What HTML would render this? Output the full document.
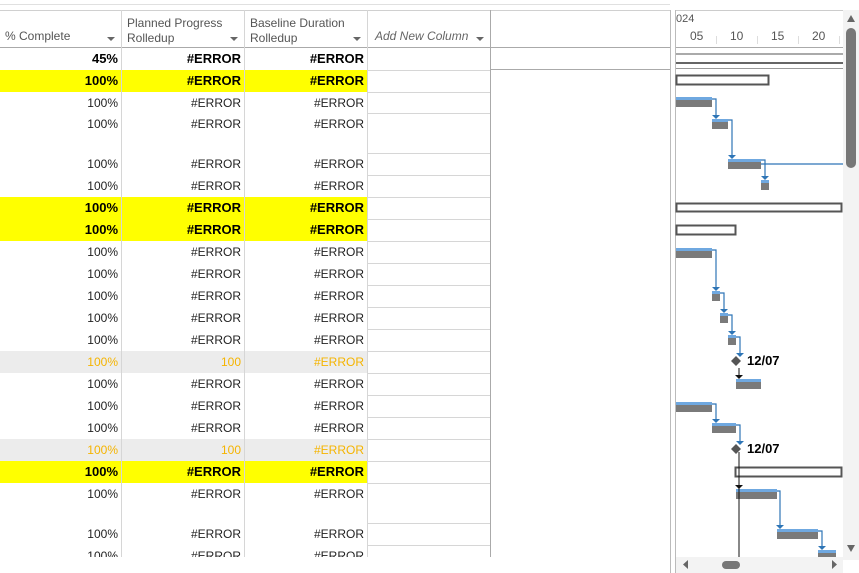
<!DOCTYPE html>
<html><head><style>
body{margin:0;width:859px;height:573px;overflow:hidden;background:#fff;font-family:"Liberation Sans",sans-serif;position:relative}
.a{position:absolute}
.c{position:absolute;text-align:right;font-size:12px;color:#222;box-sizing:border-box;padding-right:3px;line-height:22px}
.b{font-weight:bold;font-size:13px;color:#000}
.o{color:#f5b400}
.h{position:absolute;font-size:12px;color:#555;line-height:15px}
</style></head><body>
<div class="a" style="left:0;top:4px;width:670px;height:1px;background:#e0e0e0"></div>
<div class="a" style="left:0;top:10px;width:670px;height:1px;background:#d0d0d0"></div>
<div class="h" style="left:5px;top:29px">% Complete</div>
<div class="h" style="left:127px;top:16px">Planned Progress<br>Rolledup</div>
<div class="h" style="left:250px;top:16px">Baseline Duration<br>Rolledup</div>
<div class="h" style="left:375px;top:29px;font-style:italic;color:#666">Add New Column</div>
<div class="a" style="left:107px;top:37px;border:4px solid transparent;border-top:4px solid #666"></div>
<div class="a" style="left:230px;top:37px;border:4px solid transparent;border-top:4px solid #666"></div>
<div class="a" style="left:353px;top:37px;border:4px solid transparent;border-top:4px solid #666"></div>
<div class="a" style="left:476px;top:37px;border:4px solid transparent;border-top:4px solid #666"></div>
<div class="a" style="left:0;top:47px;width:670px;height:1px;background:#aaa"></div>
<div class="a" style="left:490px;top:69px;width:180px;height:1px;background:#aaa"></div>
<div id="rows"></div>
<div class="a" style="left:121px;top:10px;width:1px;height:547px;background:#d6d6d6"></div>
<div class="a" style="left:244px;top:10px;width:1px;height:547px;background:#d6d6d6"></div>
<div class="a" style="left:367px;top:10px;width:1px;height:547px;background:#d6d6d6"></div>
<div class="a" style="left:490px;top:10px;width:1px;height:547px;background:#aaa"></div>
<div class="a" style="left:670px;top:10px;width:1px;height:563px;background:#bbb"></div>
<div class="a" style="left:675px;top:10px;width:1px;height:563px;background:#bbb"></div>
<div class="a" style="left:676px;top:10px;width:170px;height:1px;background:#ccc"></div>
<div class="a" style="left:676px;top:13px;font-size:11px;color:#555">024</div>
<div class="a" style="left:690px;top:29px;font-size:12px;color:#555">05</div>
<div class="a" style="left:730px;top:29px;font-size:12px;color:#555">10</div>
<div class="a" style="left:771px;top:29px;font-size:12px;color:#555">15</div>
<div class="a" style="left:812px;top:29px;font-size:12px;color:#555">20</div>
<div class="a" style="left:676px;top:47px;width:167px;height:1px;background:#aaa"></div>
<svg class="a" style="left:0;top:0" width="859" height="573">
<g stroke="#ddd"><line x1="716.5" y1="36" x2="716.5" y2="44"/><line x1="757.5" y1="36" x2="757.5" y2="44"/><line x1="798.5" y1="36" x2="798.5" y2="44"/><line x1="839.5" y1="36" x2="839.5" y2="44"/></g>
<g>
<rect x="676" y="53" width="167" height="2" fill="#aaa"/>
<rect x="676" y="62" width="167" height="2" fill="#666"/>
<rect x="676" y="68" width="167" height="1" fill="#999"/>
<rect x="676.5" y="75.5" width="92" height="9" fill="none" stroke="#555" stroke-width="2"/>
<rect x="676.5" y="203.5" width="165" height="8" fill="none" stroke="#555" stroke-width="2"/>
<rect x="676.5" y="225.5" width="59" height="9" fill="none" stroke="#555" stroke-width="2"/>
<rect x="735.5" y="467.5" width="106" height="9" fill="none" stroke="#555" stroke-width="2"/>
</g>
<g id="bars"></g>
<g fill="none" stroke="#2e75b6" stroke-width="1.2">
<path d="M712 99 H716 V118"/><path d="M728 120 H732 V158"/><path d="M761 160 H765 V179"/><path d="M761 164 H843"/>
<path d="M712 250 H716 V290"/><path d="M720 293 H724 V312"/><path d="M728 315 H732 V334"/><path d="M736 337 H740 V356"/>
<path d="M712 404 H716 V422"/><path d="M736 425 H740 V444"/>
<path d="M777 491 H780 V528"/><path d="M818 531 H822 V549"/>
</g>
<g fill="#2e75b6">
<path d="M712 115h8l-4 4z"/><path d="M728 155h8l-4 4z"/><path d="M761 176h8l-4 4z"/>
<path d="M712 287h8l-4 4z"/><path d="M720 309h8l-4 4z"/><path d="M728 331h8l-4 4z"/><path d="M736 353h8l-4 4z"/>
<path d="M712 419h8l-4 4z"/><path d="M736 441h8l-4 4z"/><path d="M776 525h8l-4 4z"/><path d="M818 546h8l-4 4z"/>
</g>
<g fill="#111"><path d="M739 368V378" stroke="#111"/><path d="M735 375h8l-4 4z"/><path d="M739 452V557" stroke="#111"/><path d="M735 485h8l-4 4z"/></g>
<g fill="#555"><path d="M736 356l5 5-5 5-5-5z"/><path d="M736 444l5 5-5 5-5-5z"/></g>
<text x="747" y="365" font-family="Liberation Sans" font-weight="bold" font-size="13">12/07</text>
<text x="747" y="453" font-family="Liberation Sans" font-weight="bold" font-size="13">12/07</text>
<rect x="843" y="10" width="16" height="550" fill="#f3f3f3"/>
<rect x="846" y="28" width="10" height="140" rx="5" fill="#777"/>
<path d="M847 22h8l-4-7z" fill="#666"/><path d="M847 545h8l-4 7z" fill="#666"/>
<rect x="676" y="557" width="167" height="16" fill="#f3f3f3"/>
<rect x="722" y="561" width="18" height="8" rx="4" fill="#777"/>
<path d="M688 560v9l-5-4.5z" fill="#666"/><path d="M832 560v9l5-4.5z" fill="#666"/>
</svg>
<script>
var R=[[48,22,'b','45%'],[70,22,'y'],[92,21,''],[113,40,''],[153,22,''],[175,22,''],[197,22,'y'],[219,22,'y'],[241,22,''],[263,22,''],[285,22,''],[307,22,''],[329,22,''],[351,22,'g'],[373,22,''],[395,22,''],[417,22,''],[439,22,'g'],[461,22,'y'],[483,40,''],[523,22,''],[545,12,'']];
var h='';
R.forEach(function(r,i){var t=r[0],H=r[1],k=r[2];
var bg=k=='y'?'#ffff00':k=='g'?'#ececec':'#fff';
var cls=(k=='b'||k=='y')?'c b':k=='g'?'c o':'c';
var p=r[3]||'100%',pl=k=='g'?'100':'#ERROR';
h+='<div class="a" style="left:0;top:'+t+'px;width:367px;height:'+H+'px;background:'+bg+';overflow:hidden">'+
'<div class="'+cls+'" style="left:0;top:0;width:121px">'+p+'</div>'+
'<div class="'+cls+'" style="left:121px;top:0;width:123px">'+pl+'</div>'+
'<div class="'+cls+'" style="left:244px;top:0;width:123px">#ERROR</div></div>';
if(i<R.length-1)h+='<div class="a" style="left:0;top:'+(t+H)+'px;width:490px;height:1px;background:#d6d6d6"></div>';
});
document.getElementById('rows').innerHTML=h;
var B=[[676,712,97],[712,728,119],[728,761,159],[761,769,180],[676,712,248],[712,720,291],[720,728,313],[728,736,335],[736,761,379],[676,712,402],[712,736,423],[736,777,489],[777,818,529],[818,836,550]];
var s='';B.forEach(function(b){s+='<rect x="'+b[0]+'" y="'+b[2]+'" width="'+(b[1]-b[0])+'" height="3" fill="#6fa8e0"/><rect x="'+b[0]+'" y="'+(b[2]+3)+'" width="'+(b[1]-b[0])+'" height="7" fill="#7a7a7a"/>';});
document.getElementById('bars').innerHTML=s;
</script>
</body></html>
